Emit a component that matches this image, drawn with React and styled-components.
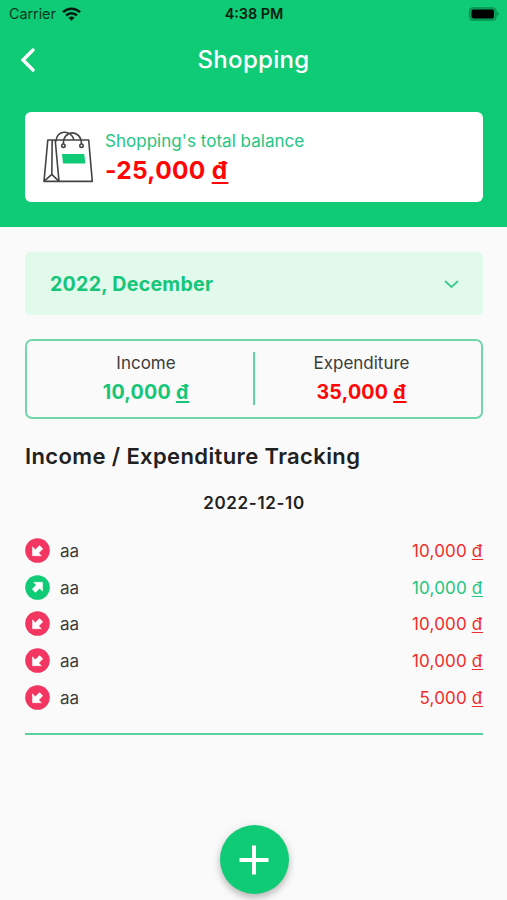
import * as React from 'react'
import styled, { createGlobalStyle } from 'styled-components';

const green = '#10cb75';

const GlobalStyle = createGlobalStyle`
    *{
        box-sizing:border-box;
    }
    body{
        margin:0;
        background-color:#fafafa;
        font-family:Inter, sans-serif;
        color:#212121;
    }
`;

const Screen = styled.div`
    width:507px;
    height:900px;
    display:flex;
    flex-direction:column;
    overflow:hidden;
`;

const Header = styled.header`
    height:227px;
    background-color:${green};
`;

const StatusBar = styled.div`
    height:27px;
    padding:0 8px 0 9px;
    display:grid;
    grid-template-columns:1fr auto 1fr;
    align-items:center;
    color:#06391f;
`;

const Carrier = styled.div`
    display:flex;
    align-items:center;
    gap:6px;
    font-size:14.4px;
    letter-spacing:-0.05px;
`;

const Clock = styled.div`
    font-size:14.4px;
    font-weight:600;
    color:#041b10;
`;

const Battery = styled.svg`
    justify-self:end;
`;

const NavBar = styled.div`
    height:65px;
    padding:0 20px;
    display:grid;
    grid-template-columns:1fr auto 1fr;
    align-items:center;
`;

const Title = styled.h1`
    margin:0;
    color:white;
    font-size:24px;
    font-weight:500;
    letter-spacing:0.3px;
`;

const BalanceCard = styled.div`
    height:90px;
    margin:20px 24px 0 25px;
    padding:0 18px;
    display:flex;
    align-items:center;
    gap:11px;
    background-color:white;
    border-radius:6px;
`;

const BalanceText = styled.div`
    padding-top:2px;
    display:flex;
    flex-direction:column;
`;

const BalanceLabel = styled.span`
    font-size:17px;
    line-height:24px;
    letter-spacing:0.03px;
    color:#25c580;
`;

const BalanceAmount = styled.span`
    font-size:24.5px;
    line-height:34px;
    font-weight:700;
    letter-spacing:0.3px;
    color:#ff0606;
`;

const Dong = styled.span`
    letter-spacing:0.05em;
    text-decoration:underline;
    text-decoration-skip-ink:none;
    text-decoration-thickness:0.08em;
    text-underline-offset:0.12em;
`;

const Content = styled.main`
    padding:25px 24px 0 25px;
    display:flex;
    flex-direction:column;
`;

const MonthSelect = styled.button`
    height:63px;
    padding:0 23px 0 25px;
    display:flex;
    align-items:center;
    justify-content:space-between;
    border:none;
    border-radius:5px;
    background-color:#e1faec;
    color:#16c678;
    font-family:inherit;
    font-size:19.6px;
    font-weight:700;
    letter-spacing:0.25px;
`;

const Summary = styled.section`
    height:80px;
    margin-top:24px;
    padding:11px 0;
    display:grid;
    grid-template-columns:226px 1fr;
    grid-template-rows:53px;
    border:2px solid #72d6a9;
    border-radius:7px;
`;

const SummaryItem = styled.div`
    padding-left:12px;
    display:flex;
    flex-direction:column;
    align-items:center;

    & + &{
        padding:0 13px 0 0;
        border-left:2px solid #61d3a0;
    }
`;

const SummaryLabel = styled.span`
    font-size:17px;
    line-height:23px;
    color:#3c3c3c;
`;

const SummaryAmount = styled.span`
    font-size:19.6px;
    line-height:34px;
    font-weight:700;
    letter-spacing:0.25px;
    color:${props => props.$color};
`;

const Heading = styled.h2`
    margin:22px 0 0;
    font-size:22px;
    line-height:30px;
    font-weight:600;
    letter-spacing:0.38px;
`;

const DateLabel = styled.h3`
    margin:20px 0 0;
    font-size:17px;
    line-height:24px;
    font-weight:600;
    letter-spacing:0.65px;
    text-align:center;
`;

const List = styled.ul`
    margin:17px 0 0;
    padding:0 0 18px;
    list-style:none;
    border-bottom:2px solid #5dd09c;
`;

const Row = styled.li`
    height:36.7px;
    display:flex;
    align-items:center;
    gap:10px;
    font-size:17px;
`;

const RowName = styled.span`
    flex:1;
    padding-top:1px;
    color:#3c3c3c;
`;

const RowAmount = styled.span`
    padding-top:1px;
    letter-spacing:0.15px;
    color:${props => props.$color};
`;

const AddButton = styled.button`
    position:absolute;
    left:219.5px;
    top:825px;
    width:69px;
    height:69px;
    padding:0;
    display:flex;
    align-items:center;
    justify-content:center;
    border:none;
    border-radius:50%;
    background-color:${green};
    box-shadow:0 4px 6px rgba(0,0,0,0.2), 0 2px 12px rgba(0,0,0,0.1);
`;

const WifiIcon = () => (
    <svg width="19" height="14" viewBox="0 0 19 14" fill="none" stroke="#041b10" strokeWidth="2.5">
        <path d="M1 5.1C5.8.5 13.2.5 18 5.1"/>
        <path d="M4.1 8.5C7.2 5.6 11.8 5.6 14.9 8.5"/>
        <path d="M6.4 10.7C8.2 9.1 10.8 9.1 12.6 10.7L9.5 13.7Z" fill="#041b10" stroke="none"/>
    </svg>
)

const BagIcon = () => (
    <svg width="51" height="52" viewBox="0 0 51 52" fill="none" stroke="#444" strokeWidth="1.6" strokeLinejoin="round">
        <path d="M4.8 9H45.7L49.3 50.4H1Z"/>
        <path d="M9.2 9L8.8 43.4L1 50.4M16 50.4L8.8 43.4M12.2 9L16 50.4"/>
        <circle cx="20.4" cy="14.7" r="1.7"/>
        <circle cx="38.5" cy="14.7" r="1.7"/>
        <path d="M20.4 13C20 -1.9 38.5 -1.9 38.5 13M13 10.4C13 -1.1 28 -2.1 31 8.9"/>
        <path d="M19 23.1H41.3L42.3 32.4H20Z" fill={green} stroke="none"/>
    </svg>
)

const DirectionIcon = ({ up }) => (
    <svg width="25" height="25" viewBox="0 0 25 25">
        <circle cx="12.5" cy="12.5" r="12.3" fill={up ? green : '#f23561'}/>
        <path
            d="M7.5 8.8V17.7H16.4L13.7 15L17.8 10.8L14.6 7.6L10.3 11.7Z"
            fill="white"
            stroke="white"
            strokeWidth="0.5"
            strokeLinejoin="round"
            transform={up ? 'rotate(180 12.5 12.5)' : undefined}
        />
    </svg>
)

const items = [
    { id: 1, name: 'aa', amount: '10,000' },
    { id: 2, name: 'aa', amount: '10,000', up: true },
    { id: 3, name: 'aa', amount: '10,000' },
    { id: 4, name: 'aa', amount: '10,000' },
    { id: 5, name: 'aa', amount: '5,000' },
];

const App = () => {
    return (
        <Screen>
            <GlobalStyle/>
            <Header>
                <StatusBar>
                    <Carrier>Carrier <WifiIcon/></Carrier>
                    <Clock>4:38 PM</Clock>
                    <Battery width="31" height="14" viewBox="0 0 31 14">
                        <rect x="1.5" y="0.8" width="26.5" height="12.4" rx="3.5" fill="#0ba65f" stroke="#0a8d51" strokeWidth="1.3"/>
                        <rect x="3.5" y="2.6" width="22.5" height="8.8" rx="1.8" fill="#000"/>
                        <path d="M29.2 4.8Q32.2 7 29.2 9.2Z" fill="#0a8d51"/>
                    </Battery>
                </StatusBar>
                <NavBar>
                    <svg width="16" height="26" viewBox="0 0 16 26" fill="none" stroke="white" strokeWidth="3.4" strokeLinecap="round">
                        <path d="M13 3L3 13L13 23"/>
                    </svg>
                    <Title>Shopping</Title>
                </NavBar>
                <BalanceCard>
                    <BagIcon/>
                    <BalanceText>
                        <BalanceLabel>Shopping's total balance</BalanceLabel>
                        <BalanceAmount>-25,000 <Dong>đ</Dong></BalanceAmount>
                    </BalanceText>
                </BalanceCard>
            </Header>
            <Content>
                <MonthSelect>
                    2022, December
                    <svg width="17" height="10" viewBox="0 0 17 10" fill="none" stroke="#3ccb8b" strokeWidth="1.8">
                        <path d="M2 2L8.5 8L15 2"/>
                    </svg>
                </MonthSelect>
                <Summary>
                    <SummaryItem>
                        <SummaryLabel>Income</SummaryLabel>
                        <SummaryAmount $color="#16c678">10,000 <Dong>đ</Dong></SummaryAmount>
                    </SummaryItem>
                    <SummaryItem>
                        <SummaryLabel>Expenditure</SummaryLabel>
                        <SummaryAmount $color="#ff0606">35,000 <Dong>đ</Dong></SummaryAmount>
                    </SummaryItem>
                </Summary>
                <Heading>Income / Expenditure Tracking</Heading>
                <DateLabel>2022-12-10</DateLabel>
                <List>
                    {items.map(item => (
                        <Row key={item.id}>
                            <DirectionIcon up={item.up}/>
                            <RowName>{item.name}</RowName>
                            <RowAmount $color={item.up ? '#25c580' : '#ef2b2b'}>{item.amount} <Dong>đ</Dong></RowAmount>
                        </Row>
                    ))}
                </List>
            </Content>
            <AddButton>
                <svg width="30" height="30" viewBox="0 0 30 30" stroke="white" strokeWidth="4">
                    <path d="M15 0.5V29.5M0.5 15H29.5"/>
                </svg>
            </AddButton>
        </Screen>
    )
}

export default App
